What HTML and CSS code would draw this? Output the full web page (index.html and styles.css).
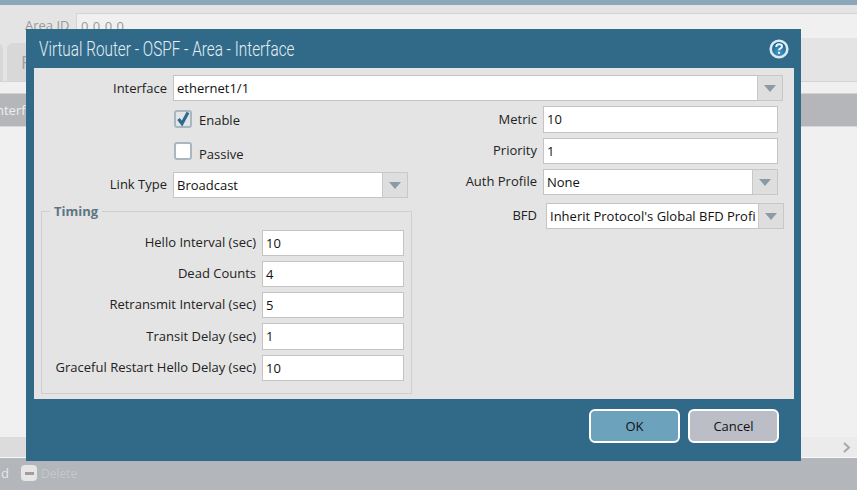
FILE: index.html
```html
<!DOCTYPE html>
<html lang="en">
<head>
    <meta charset="UTF-8">
    <title>Virtual Router - OSPF - Area - Interface</title>
    <link rel="stylesheet" href="styles.css">
</head>
<body>
    <div class="topBar"></div>
    <div class="areaRow">
        <span class="areaLabel">Area ID</span>
        <div class="areaValue">0.0.0.0</div>
    </div>
    <div class="tabStrip">
        <div class="tab"></div>
        <div class="tab">R</div>
    </div>
    <div class="tableHead">nterface</div>
    <div class="tableBody"></div>
    <div class="scrollStrip">
        <svg class="scrollArrow" width="9" height="11" viewBox="0 0 9 11"><path d="M2 1l5 4.500-5 4.500" fill="none" stroke="#a8a8a8" stroke-width="2"/></svg>
    </div>
    <div class="toolBar">
        <span class="toolText">d</span>
        <span class="deleteIcon"><span class="deleteBar"></span></span>
        <span class="toolDelete">Delete</span>
    </div>

    <div class="dialog">
        <div class="dialogTitle">
            <span class="titleText">Virtual Router - OSPF - Area - Interface</span>
            <svg class="helpIcon" width="20" height="20" viewBox="0 0 20 20">
                <defs>
                    <radialGradient id="helpFill" cx="50%" cy="70%" r="60%">
                        <stop offset="0" stop-color="#4a9cca"/>
                        <stop offset="1" stop-color="#14608f"/>
                    </radialGradient>
                </defs>
                <circle cx="10" cy="10" r="8.300" fill="url(#helpFill)" stroke="#dbe9f1" stroke-width="2.600"/>
                <path d="M7.200 8c0-3.700 5.800-3.700 5.800-.6 0 2-3 2-3 3.900" fill="none" stroke="#eef5f9" stroke-width="2"/>
                <rect x="9" y="12.800" width="2" height="2" fill="#eef5f9"/>
            </svg>
        </div>
        <div class="dialogBody">
            <div class="formRow interfaceRow">
                <label class="fieldLabel">Interface</label>
                <div class="field grow">ethernet1/1</div>
                <div class="dropBtn"><span class="arrow"></span></div>
            </div>
            <div class="columns">
                <div class="leftCol">
                    <div class="checkRow enableRow">
                        <span class="checkBox checked">
                            <svg width="18" height="18" viewBox="0 0 18 18"><path d="M4.500 9l3.500 4.500 6-11" fill="none" stroke="#2f6a8f" stroke-width="3.200"/></svg>
                        </span>
                        <span class="checkText">Enable</span>
                    </div>
                    <div class="checkRow passiveRow">
                        <span class="checkBox"></span>
                        <span class="checkText">Passive</span>
                    </div>
                    <div class="formRow linkRow">
                        <label class="fieldLabel">Link Type</label>
                        <div class="field linkField">Broadcast</div>
                        <div class="dropBtn"><span class="arrow"></span></div>
                    </div>
                    <fieldset class="timing">
                        <legend>Timing</legend>
                        <div class="timingRow"><label>Hello Interval (sec)</label><div class="field">10</div></div>
                        <div class="timingRow"><label>Dead Counts</label><div class="field">4</div></div>
                        <div class="timingRow"><label>Retransmit Interval (sec)</label><div class="field">5</div></div>
                        <div class="timingRow"><label>Transit Delay (sec)</label><div class="field tallField">1</div></div>
                        <div class="timingRow"><label>Graceful Restart Hello Delay (sec)</label><div class="field">10</div></div>
                    </fieldset>
                </div>
                <div class="rightCol">
                    <div class="rightRow"><label>Metric</label><div class="field grow tallField">10</div></div>
                    <div class="rightRow"><label>Priority</label><div class="field grow">1</div></div>
                    <div class="rightRow"><label>Auth Profile</label><div class="field grow">None</div><div class="dropBtn"><span class="arrow"></span></div></div>
                    <div class="rightRow bfdRow"><label>BFD</label><div class="field grow bfdField">Inherit Protocol's Global BFD Profi</div><div class="dropBtn"><span class="arrow"></span></div></div>
                </div>
            </div>
        </div>
        <div class="dialogButtons">
            <button class="okBtn">OK</button>
            <button class="cancelBtn">Cancel</button>
        </div>
    </div>
</body>
</html>
```
FILE: styles.css
```css
body {
    margin: 0;
    height: 490px;
    overflow: hidden;
    position: relative;
    display: flex;
    flex-direction: column;
    background-color: #f0f0f0;
    font-family: 'Open Sans', 'Noto Sans', sans-serif;
    font-size: 13px;
    color: #222;
}

.topBar {
    height: 5px;
    background-color: #8aa8b8;
}

.areaRow {
    height: 33px;
    display: flex;
    align-items: flex-start;
    padding-top: 8px;
    box-sizing: border-box;
    background-color: #e4e4e4;
    color: #999;
}

.areaLabel {
    margin-left: 25px;
    width: 51px;
    line-height: 24px;
    white-space: nowrap;
}

.areaValue {
    flex: 1;
    height: 25px;
    background-color: #f0f0f0;
    border-top: 1px solid #d4d4d4;
    border-left: 1px solid #d4d4d4;
    padding-left: 4px;
    line-height: 24px;
    letter-spacing: 0.5px;
}

.tabStrip {
    height: 44px;
    padding-top: 5px;
    display: flex;
    gap: 4px;
    border-bottom: 1px solid #d4d4d4;
    background-color: #e4e4e4;
    box-sizing: border-box;
}

.tab {
    width: 60px;
    margin-left: -57px;
    background-color: #d8d8d8;
    border-radius: 6px 6px 0 0;
    color: #a0a0a0;
    font-size: 18px;
    line-height: 38px;
}

.tab + .tab {
    margin-left: 0;
    padding-left: 14px;
}

.tableHead {
    height: 33px;
    margin-top: 11px;
    background-color: #b4b6ba;
    border-top: 1px solid #d4d4d4;
    box-sizing: border-box;
    color: #eee;
    line-height: 32px;
    text-indent: -4px;
}

.tableBody {
    flex: 1;
    border-top: 1px solid #d8d8d8;
}

.scrollStrip {
    height: 21px;
    background: linear-gradient(to right, #dcdcdc 26px, #ebebeb 26px);
    border-bottom: 1px solid #f8f8f8;
    box-sizing: border-box;
    display: flex;
    justify-content: flex-end;
    align-items: center;
    padding-right: 6px;
}

.toolBar {
    height: 32px;
    background-color: #b3b6ba;
    display: flex;
    align-items: center;
    color: #e8e8e8;
    padding-bottom: 2px;
    box-sizing: border-box;
}

.toolText {
    margin-left: 1px;
    width: 20px;
}

.deleteIcon {
    width: 16px;
    height: 16px;
    border-radius: 4px;
    background-color: #e6e6e6;
    display: flex;
    align-items: center;
    justify-content: center;
}

.deleteBar {
    width: 9px;
    height: 3px;
    background-color: #a89a9a;
}

.toolDelete {
    margin-left: 4px;
    font-size: 12px;
    color: #c6c8cb;
}

/* dialog sits over the page */
.dialog {
    position: absolute;
    left: 26px;
    top: 29px;
    width: 775px;
    height: 432px;
    background-color: #316a89;
    display: flex;
    flex-direction: column;
}

.dialogTitle {
    height: 39px;
    display: flex;
    align-items: center;
    justify-content: space-between;
    padding: 0 12px 0 13px;
    flex-shrink: 0;
}

.titleText {
    color: #e4eff5;
    font-family: 'Roboto', sans-serif;
    font-weight: 300;
    font-size: 20px;
    transform: scaleX(0.766);
    transform-origin: left center;
    white-space: nowrap;
}

.dialogBody {
    margin: 0 7px 0 8px;
    height: 331px;
    background-color: #e4e4e4;
    padding: 7px 11px 0 7px;
    box-sizing: border-box;
}

.field {
    height: 26px;
    box-sizing: border-box;
    background-color: #fff;
    border: 1px solid #c4c4c4;
    padding-left: 3px;
    line-height: 24px;
    color: #111;
    white-space: nowrap;
    overflow: hidden;
}

.tallField {
    height: 27px;
}

.grow {
    flex: 1;
    min-width: 0;
}

.dropBtn {
    width: 26px;
    height: 26px;
    box-sizing: border-box;
    margin-left: -1px;
    background-color: #dedede;
    border: 1px solid #c8c8c8;
    display: flex;
    align-items: center;
    justify-content: center;
}

.arrow {
    width: 0;
    height: 0;
    border-left: 6px solid transparent;
    border-right: 6px solid transparent;
    border-top: 7px solid #8a9ba6;
}

.formRow {
    display: flex;
    align-items: center;
}

.fieldLabel {
    width: 126px;
    text-align: right;
    margin-right: 6px;
    color: #222;
}

.linkRow .fieldLabel {
    padding-bottom: 2px;
}

.columns {
    display: flex;
}

.leftCol {
    width: 371px;
    flex-shrink: 0;
}

.checkRow {
    display: flex;
    align-items: center;
    margin-left: 133px;
    height: 18px;
}

.enableRow {
    margin-top: 9px;
}

.passiveRow {
    margin-top: 14px;
}

.checkBox {
    width: 18px;
    height: 18px;
    box-sizing: border-box;
    background-color: #fff;
    border: 2px solid #a9b7c0;
    border-radius: 3px;
    display: block;
}

.checkBox.checked {
    background-color: #e2e6e9;
}

.checkBox svg {
    display: block;
    margin: -2px;
}

.checkText {
    margin-left: 7px;
    color: #222;
}

.enableRow .checkText {
    padding-top: 2px;
}

.passiveRow .checkText {
    padding-top: 6px;
}

.linkRow {
    margin-top: 12px;
}

.linkField {
    width: 210px;
}

.timing {
    margin: 6px 0 0;
    padding: 12px 7px 0 0;
    height: 190px;
    box-sizing: border-box;
    border: 1px solid #cfcfcf;
    min-width: 0;
}

.timing legend {
    margin-left: 8px;
    padding: 0 4px;
    font-weight: bold;
    color: #5d7583;
    line-height: 14px;
}

.timingRow {
    display: flex;
    justify-content: flex-end;
    align-items: center;
    margin-bottom: 5px;
}

.timingRow label {
    margin-right: 6px;
    padding-bottom: 2px;
    color: #222;
    white-space: nowrap;
}

.timingRow .field {
    width: 142px;
}

.rightCol {
    flex: 1;
    padding-top: 5px;
    padding-right: 5px;
    min-width: 0;
}

.rightRow {
    display: flex;
    align-items: center;
    margin-bottom: 5px;
}

.rightRow label {
    width: 118px;
    margin-left: 7px;
    margin-right: 6px;
    padding-bottom: 2px;
    text-align: right;
    color: #222;
    flex-shrink: 0;
}

.bfdRow {
    margin-top: 8px;
    margin-right: -6px;
}

.bfdRow label {
    margin-right: 9px;
}

.dialogButtons {
    display: flex;
    justify-content: flex-end;
    gap: 8px;
    padding: 10px 22px 0 0;
}

.dialogButtons button {
    width: 91px;
    height: 34px;
    box-sizing: border-box;
    border: 2px solid #fff;
    border-radius: 6px;
    font-family: inherit;
    font-size: 13px;
    color: #111;
}

.okBtn {
    background-color: #6ca2bc;
}

.cancelBtn {
    background-color: #bcbec7;
}
```
